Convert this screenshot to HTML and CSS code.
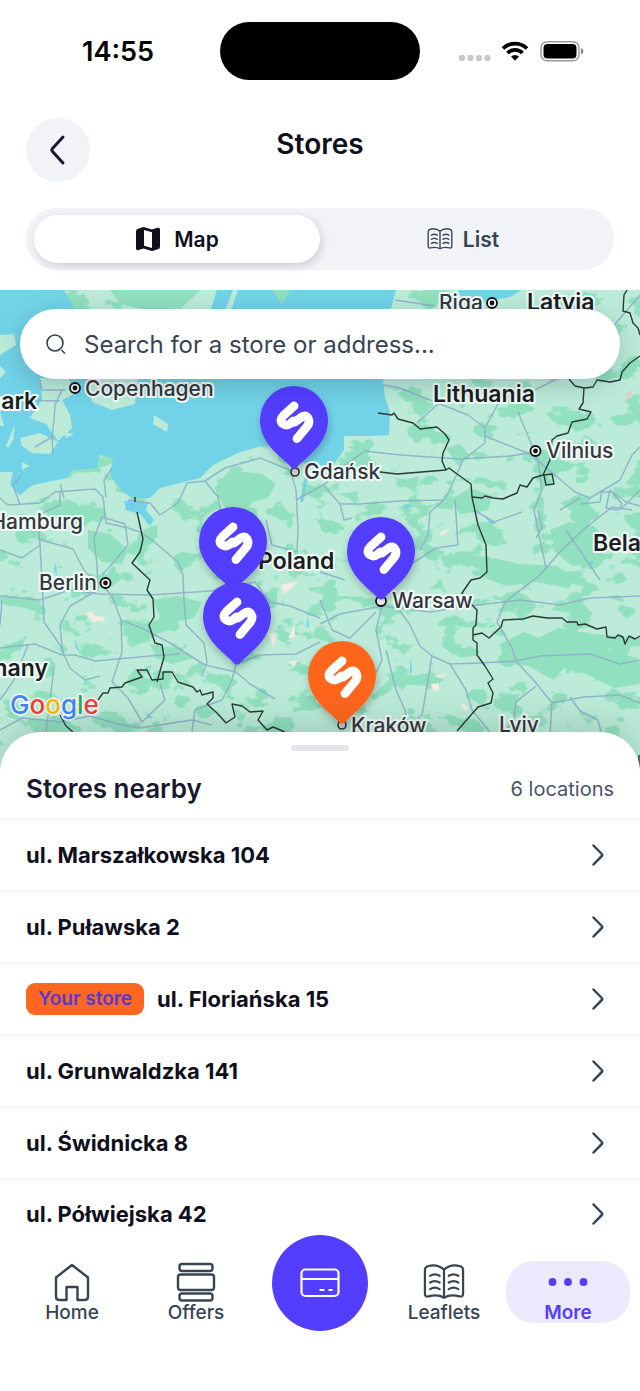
FILE: index.html
```html
<!DOCTYPE html>
<html lang="en">
<head>
<meta charset="utf-8">
<meta name="viewport" content="width=device-width, initial-scale=1">
<title>Stores</title>
<link rel="stylesheet" href="styles.css">
</head>
<body>
<svg class="sprite" aria-hidden="true">
  <symbol id="chevron" viewBox="0 0 32 32"><path d="M11.500 6.500 L19.800 15 Q20.800 16 19.800 17 L11.500 25.500" fill="none" stroke="currentColor" stroke-width="2.500" stroke-linecap="round"/></symbol>
  <symbol id="book" viewBox="0 0 44 44">
    <g fill="none" stroke="currentColor" stroke-width="2.300" stroke-linecap="round" stroke-linejoin="round">
      <path d="M22 9 C17 4.500 10 4 5 5.500 Q2 6.500 2 9.500 V34 Q2 38 6 37 C12 35.500 17 35.500 22 38.500 C27 35.500 32 35.500 38 37 Q42 38 42 34 V9.500 Q42 6.500 39 5.500 C34 4 27 4.500 22 9 Z M22 9 V38"/>
      <path d="M7.500 15.500 Q12 12.500 17.500 15.500 M7.500 22.500 Q12 19.500 17.500 22.500 M7.500 29.500 Q12 26.500 17.500 29.500 M27 15.500 Q32 12.500 37 15.500 M27 22.500 Q32 19.500 37 22.500 M27 29.500 Q32 26.500 37 29.500"/>
    </g>
  </symbol>
  <symbol id="pin" viewBox="-40 -4 80 96" overflow="visible">
    <path d="M-5 79 C-14 70 -34 57 -34 34 A34 34 0 0 1 34 34 C34 57 14 70 5 79 Q0 86 -5 79 Z" fill="currentColor"/>
    <path d="M0 20 L-10.500 29.500 Q-15 34 -11.500 37.500 Q-7.500 40.500 -3.500 37.500 L-.5 35 L1 36 L7 31.500 Q11.500 28.500 14 32 Q16.500 36 13 40.500 L3 52.500" fill="none" stroke="#fff" stroke-width="8.800" stroke-linecap="round" stroke-linejoin="round"/>
  </symbol>
</svg>

<div class="screen">
  <div class="status">
    <time class="status-time">14:55</time>
    <div class="island"></div>
    <div class="status-icons">
      <svg width="126" height="24" viewBox="0 0 126 24" aria-hidden="true">
        <g fill="#c8c8c8"><rect x="1" y="16" width="6" height="6" rx="2"/><rect x="9.500" y="16" width="6" height="6" rx="2"/><rect x="18" y="16" width="6" height="6" rx="2"/><rect x="26.500" y="16" width="6" height="6" rx="2"/></g>
        <g fill="none" stroke="#000" stroke-width="3.800"><path d="M45 9.500 A17 17 0 0 1 69 9.500"/><path d="M49.500 14 A10.500 10.500 0 0 1 64.500 14"/></g>
        <path d="M53 17.500 A6 6 0 0 1 61 17.500 L57 21.800 Z"/>
        <rect x="83" y="2.700" width="38" height="19" rx="6" fill="none" stroke="#999" stroke-width="1.500"/>
        <rect x="85.500" y="5" width="33" height="14.500" rx="4"/>
        <path d="M123 9 Q125.500 10 125.500 12 Q125.500 14.500 123 15.500 Z" fill="#888"/>
      </svg>
    </div>
  </div>

  <header class="header">
    <button class="back" type="button" aria-label="Back">
      <svg width="32" height="32" viewBox="0 0 32 32"><path d="M21 3 L10.500 14.500 Q9.200 16 10.500 17.500 L21 29" fill="none" stroke="currentColor" stroke-width="3" stroke-linecap="round"/></svg>
    </button>
    <h1 class="title">Stores</h1>
  </header>

  <div class="segments" role="tablist">
    <button class="segment segment-active" type="button" role="tab" aria-selected="true">
      <svg width="26" height="26" viewBox="0 0 26 26" aria-hidden="true"><path fill="currentColor" fill-rule="evenodd" d="M1 5.500 Q1 3.500 2.500 3 L7.500 1.200 Q8.500 1 9.500 1.300 L17 3.500 L22.500 1.800 Q25 1.200 25 3.500 V20.500 Q25 22.500 23.500 23 L18 24.800 Q17 25 16 24.700 L8.500 22.500 L3.500 24 Q1 24.800 1 22.500 Z M9 4 V19.800 L17 22 V6.300 Z"/></svg>
      Map
    </button>
    <button class="segment" type="button" role="tab" aria-selected="false">
      <svg width="26" height="26" aria-hidden="true"><use href="#book"/></svg>
      List
    </button>
  </div>

  <section class="map" aria-label="Map of stores">
    <svg class="map-canvas" viewBox="0 290 640 480" preserveAspectRatio="xMidYMin slice">
      <defs>
        <filter id="woods" x="0" y="0" width="100%" height="100%" color-interpolation-filters="sRGB">
          <feTurbulence type="fractalNoise" baseFrequency="0.032 0.042" numOctaves="4" seed="11"/>
          <feColorMatrix values="0 0 0 0 .569  0 0 0 0 .878  0 0 0 0 .749  18 0 0 0 -10.200"/>
        </filter>
        <filter id="drop" x="-30%" y="-20%" width="160%" height="150%"><feDropShadow dx="1" dy="4" stdDeviation="4" flood-opacity=".25"/></filter>
      </defs>
      <rect y="290" width="640" height="480" fill="#bcecd9"/>
      <rect y="290" width="640" height="480" filter="url(#woods)"/>
      <g fill="#91e0bf">
        <path d="M214 488 l12 -10 l18 -6 l18 2 l14 10 l-8 14 l-16 4 l-10 14 l-14 -4 l-8 -12 z"/>
        <path d="M480 566 l14 -8 l26 6 l36 2 l22 12 l-10 10 l-32 -6 l-30 4 l-20 -8 z M550 530 l20 -8 l24 4 l18 18 l-14 16 l-26 6 l-16 -14 z"/>
        <path d="M500 644 l24 -12 l14 6 l20 -10 l36 6 l46 4 v8 l-30 2 l-10 10 l40 4 v22 l-26 4 l-28 -14 l-22 -6 l-10 12 l-26 -14 l-24 -6 z"/>
        <path d="M88 530 l22 4 l18 16 l-6 14 l-20 -2 l-14 -14 z M152 600 l26 -4 l24 6 l-8 16 l-30 6 z M150 644 l26 4 l18 10 l-22 6 l-16 -6 z"/>
        <path d="M450 500 l20 -12 l22 8 l-4 14 l-28 4 z M446 448 l14 -4 l10 12 l-12 10 z M200 290 l-90 0 l10 14 l34 8 l30 -6 z"/>
      </g>
      <g fill="#72d3e8">
        <path d="M0 290 H64 L76 312 H210 L217 290 H396 L390 312 L383 379 L385 397 L390 412 L389 435 L372 436 L344 436 L344 450 L334 464 L318 466 L300 462 L293 467 L277 452 L267 445 L240 452 L213 465 L200 478 L160 488 L150 498 L133 498 L123 492 L110 475 L113 458 L100 455 L97 468 L72 470 L67 478 L33 485 L20 495 L10 485 L13 472 L0 472 Z"/>
        <path d="M458 290 H522 L510 297 L480 302 L462 299 Z M124 501 L148 502 L146 510 L154 520 L150 526 L140 514 L126 510 Z M300 502 l5 -26 l3 0 l-5 26 z"/>
        <path d="M54 570 l2 -8 l1 14 z M74 638 l7 16 l-5 -6 z M306 626 l2 -10 l1 12 z M403 506 l8 -2 l-3 6 z M486 518 l10 6 l-6 0 z M410 656 l2 14 l-2 6 z M145 712 l8 6 l-4 0 z M588 562 l6 -1 l-4 5 z"/>
      </g>
      <g fill="#bcecd9">
        <path d="M40 378 H68 L76 393 L62 400 L70 415 L72 428 L58 441 L46 424 L30 418 L42 400 Z M20 438 L40 433 L58 442 L50 454 L32 453 L22 446 Z M0 335 L14 334 L16 345 L0 355 Z M89 378 H138 L135 404 L112 410 L92 402 Z M154 415 L168 424 L167 432 L153 424 Z"/>
        <path d="M0 412 l4 14 l-4 0 z M6 446 l9 -22 l-2 16 l-5 8 z M0 366 l6 6 l-6 6 z M225 310 l8 -20 h5 l-7 20 z M64 432 l10 2 l-8 4 z M22 462 l8 4 l-8 4 z"/>
        <path d="M272 290 h18 l-8 14 z" fill="#91e0bf"/>
      </g>
      <g fill="#f2ece0">
        <path d="M85 614 l6 -3 l5 5 l8 1 l1 5 l-6 -1 l-5 1 z M281 585 l16 -4 l-5 7 l-8 6 z M288 638 l7 -13 l0 12 z M268 632 l8 2 l-2 14 l-4 -10 z M440 532 l11 -4 l-5 5 l-5 3 z M433 676 l14 -2 l-7 4 z M431 684 l8 -1 l0 8 l-7 -1 z M460 702 l10 6 l-5 3 z M288 662 l10 -2 l-4 7 z"/>
        <path d="M625 393 l7 -3 l0 7 l-7 4 z" fill="#d3d5cd"/>
      </g>
      <g fill="none" stroke="#8eb0c8" stroke-width="1.500" stroke-linejoin="round" opacity=".9">
        <path d="M0 498 L8 505 L40 503 L55 492 L95 489 L103 497 L106 523 L128 528 L140 532 L152 540 L178 562 L183 575 L184 600 L186 625 L204 643 L207 662 L202 676"/>
        <path d="M0 550 L22 558 L40 545 L38 515 L60 505 L60 492 M38 539 L73 549 L85 572 L100 583 L112 596 L121 620 L146 630 L170 643 L205 665 L236 672 L250 684 L275 699"/>
        <path d="M0 596 L40 600 L70 590 L100 594 L150 595 L210 591 L255 582 L270 602 L290 606 L320 618 M0 648 L35 644 L62 655 L75 655 L95 661 L150 656 L180 654"/>
        <path d="M40 545 L43 600 L44 622 L60 645 L70 668 L85 680 L100 676 M63 655 L60 625 L70 606 L98 590 L97 565 L94 538 L102 517 L125 524 L128 545 L112 564 L102 575"/>
        <path d="M0 625 L2 600 M28 645 L14 680 L0 700 M54 666 L50 700 L46 732 M0 730 L22 718 L60 722 L90 716 L118 724 L140 728 L192 720 L212 725"/>
        <path d="M121 620 L122 652 L112 682 L128 698 L142 722 L165 700 L160 684 M192 732 L195 710 L222 700 L232 680 L236 664 L260 655 L296 654 L320 642"/>
        <path d="M106 497 L104 480 L112 468 M20 505 L13 485 L22 475 M60 484 L64 498 M35 447 L52 437 L54 420 L55 405 L62 390 M52 437 L53 455 M15 400 L60 401 M40 380 L42 390 L65 390"/>
        <path d="M128 500 L150 503 L160 515 L178 503 L187 483 L205 481 L225 468 L260 458 L290 470 L296 490 L298 528 L297 552 L272 545 L266 520 M205 481 L218 497 L222 520"/>
        <path d="M296 500 L325 484 L345 465 L365 451 L400 455 L460 459 L510 456 L535 452 M324 486 L340 504 L360 504 L400 501 L444 500 L452 485 L463 460 L485 443 L485 428 L500 400 L535 390 L570 372"/>
        <path d="M384 385 L400 388 L430 400 L468 415 L485 428 M417 423 L440 402 M485 436 L530 454 L575 492 L590 498 L620 480 L632 455 L640 447 M518 412 L528 436 L538 460 L542 490 L534 510 L540 540 L546 568"/>
        <path d="M340 504 L344 520 L352 518 M444 500 L430 512 L428 535 L420 550 M455 500 L458 545 L436 548 L405 568 M632 510 L612 507 L584 529 L560 552 L540 575 L505 602 L497 622 L512 648 L516 661 L536 683 L552 703 L584 697 L620 695 L640 703"/>
        <path d="M320 624 L340 614 L382 606 L430 612 L470 606 L520 600 L560 605 L590 598 L640 596 M382 606 L376 630 L382 660 L370 685 L345 705"/>
        <path d="M395 604 L410 625 L420 646 L432 656 L450 664 L480 663 L515 661 L540 656 L590 654 L620 664 L640 660 M432 656 L428 680 L422 715 L408 727 L405 710 L396 690 L386 650"/>
        <path d="M450 664 L466 690 L472 710 L490 732 M536 686 L516 702 L514 720 L505 732 M552 703 L550 735 M570 697 L580 711 L598 720 L601 732 M320 600 L332 630 L350 638 L376 612 M320 572 L345 580"/>
        <path d="M600 492 h12 l14 10 l14 4 M610 490 l12 14 l-4 6 l-12 -2 z M602 490 l-2 12 l-20 2 M620 510 l20 -20 M560 510 l20 -12 M474 510 l20 12 l28 -10 M538 510 l4 18 l-6 10 M600 580 l-34 -50 M395 300 l40 6 M560 305 l-30 20 M610 330 l30 -35"/>
      </g>
      <g fill="none" stroke="#2b3b38" stroke-width="1.400" stroke-linejoin="round">
        <path d="M380 472 L397 474 L446 470 M378 413 L392 415 L394 413 L398 419 L413 423 L420 429 L437 427 L445 434 L449 440 L443 453 L442 461 L446 470 L449 468 L457 474 L471 484 L472 497 L478 525 L486 545 L487 572 L480 578 L471 580 L462 593 L472 605 L477 610 L476 625 L473 628 L473 640 L477 643 L477 655 L485 666 L493 679 L488 683 L493 693 L491 703 L478 707 L457 731"/>
        <path d="M472 497 L482 498 L485 496 L493 498 L503 499 L512 495 L517 493 L520 485 L527 487 L533 478 L543 475 L550 460 L552 440 L557 436 L568 433 L572 422 L587 419 L591 412 L579 409 L583 403 L584 388 M544 475 L552 474 L554 484 L546 485 Z"/>
        <path d="M569 379 L575 386 L584 388 L593 387 L597 380 L610 382 L620 380 L622 372 L630 363 L640 356 M627 290 L624 295 L623 311 L630 313 L633 323 L638 328 L640 335"/>
        <path d="M473 635 L482 633 L489 638 L501 627 L503 620 L523 619 L533 616 L547 618 L562 618 L567 622 L577 622 L578 625 L585 624 L597 629 L606 627 L607 637 L615 638 L618 635 L623 637 L625 644 L629 636 L635 639 L640 636"/>
        <path d="M135 497 V502 M137 512 L143 539 L140 552 L132 563 L150 580 L147 590 L153 599 L154 617 L149 625 L155 643 L162 645 L164 657 L157 682"/>
        <path d="M98 700 L103 693 L108 693 L110 688 L122 687 L125 683 L142 677 L137 670 L147 670 L152 680 L163 679 L163 672 L172 672 L178 682 L193 687 L197 692 L200 690 L202 695 L213 692 L213 698 L207 704 L217 713 L226 723 L235 717 L232 704 L242 706 L250 712 L263 711 L258 720 L267 730 L273 727 L285 732 M60 715 L66 726 L73 732 M639 755 V768"/>
      </g>
      <g class="markers">
        <g fill="#fff" stroke="#111" stroke-width="1.800"><circle cx="75" cy="388" r="5"/><circle cx="492" cy="303" r="5"/><circle cx="535.500" cy="451" r="5"/><circle cx="105.500" cy="583" r="5"/><circle cx="381" cy="601" r="5"/></g>
        <g fill="#111"><circle cx="75" cy="388" r="2.400"/><circle cx="492" cy="303" r="2.400"/><circle cx="535.500" cy="451" r="2.400"/><circle cx="105.500" cy="583" r="2.400"/></g>
        <g fill="#ddd" stroke="#333" stroke-width="1.600"><circle cx="295" cy="472" r="4"/><circle cx="342" cy="725" r="4"/></g>
      </g>
      <g class="city">
        <text x="85" y="396">Copenhagen</text><text x="439" y="310">Riga</text><text x="546" y="458">Vilnius</text>
        <text x="304" y="479">Gdańsk</text><text x="83" y="529" text-anchor="end">Hamburg</text><text x="39" y="590">Berlin</text>
        <text x="392" y="608">Warsaw</text><text x="351" y="733">Kraków</text><text x="499" y="732">Lviv</text>
      </g>
      <g class="country">
        <text x="527" y="310">Latvia</text><text x="433" y="402">Lithuania</text><text x="37" y="409" text-anchor="end">Denmark</text>
        <text x="258" y="569">Poland</text><text x="593" y="551">Belarus</text><text x="48" y="676" text-anchor="end">Germany</text>
      </g>
      <text class="google" x="10" y="714"><tspan fill="#4285f4">G</tspan><tspan fill="#ea4335">o</tspan><tspan fill="#fbbc05">o</tspan><tspan fill="#4285f4">g</tspan><tspan fill="#34a853">l</tspan><tspan fill="#ea4335">e</tspan></text>
      <g color="#533dff">
        <use href="#pin" x="254" y="382" width="80" height="96" filter="url(#drop)"/>
        <use href="#pin" x="193" y="503" width="80" height="96" filter="url(#drop)"/>
        <use href="#pin" x="197" y="578" width="80" height="96" filter="url(#drop)"/>
        <use href="#pin" x="341" y="513" width="80" height="96" filter="url(#drop)"/>
      </g>
      <g color="#ff661f"><use href="#pin" x="302" y="637" width="80" height="96" filter="url(#drop)"/></g>
    </svg>
    <label class="search">
      <svg width="22" height="22" viewBox="0 0 22 22" aria-hidden="true"><g fill="none" stroke="currentColor" stroke-width="1.600" stroke-linecap="round"><circle cx="9" cy="10" r="8"/><path d="M16 17.500 L18.500 20"/></g></svg>
      <input class="search-input" type="text" placeholder="Search for a store or address..." aria-label="Search for a store or address">
    </label>
  </section>

  <main class="sheet">
    <div class="handle"></div>
    <div class="sheet-header">
      <h2 class="sheet-title">Stores nearby</h2>
      <span class="count">6 locations</span>
    </div>
    <div class="list">
      <button class="row" type="button"><span>ul. Marszałkowska 104</span><svg class="chevron"><use href="#chevron"/></svg></button>
      <button class="row" type="button"><span>ul. Puławska 2</span><svg class="chevron"><use href="#chevron"/></svg></button>
      <button class="row" type="button"><span class="badge">Your store</span><span>ul. Floriańska 15</span><svg class="chevron"><use href="#chevron"/></svg></button>
      <button class="row" type="button"><span>ul. Grunwaldzka 141</span><svg class="chevron"><use href="#chevron"/></svg></button>
      <button class="row" type="button"><span>ul. Świdnicka 8</span><svg class="chevron"><use href="#chevron"/></svg></button>
      <button class="row" type="button"><span>ul. Półwiejska 42</span><svg class="chevron"><use href="#chevron"/></svg></button>
    </div>
  </main>

  <nav class="nav">
    <a class="nav-item" href="#home">
      <svg width="42" height="42" viewBox="0 0 42 42" aria-hidden="true"><path d="M5 16.500 L21 4 L37 16.500 V35.500 Q37 39 33.500 39 H26.500 V26 H15.500 V39 H8.500 Q5 39 5 35.500 Z" fill="none" stroke="currentColor" stroke-width="2.400" stroke-linejoin="round"/></svg>
      Home
    </a>
    <a class="nav-item" href="#offers">
      <svg width="42" height="42" viewBox="0 0 42 42" aria-hidden="true"><g fill="none" stroke="currentColor" stroke-width="2.400"><rect x="4.500" y="3" width="33" height="7" rx="2.500"/><rect x="3" y="13.500" width="36" height="15.500" rx="2.500"/><rect x="4.500" y="32.500" width="33" height="7" rx="2.500"/></g></svg>
      Offers
    </a>
    <button class="fab" type="button" aria-label="Card">
      <svg width="40" height="30" viewBox="0 0 40 30"><g fill="none" stroke="currentColor" stroke-width="2.200"><rect x="1.500" y="1.500" width="37" height="26.500" rx="4"/><path d="M1.500 11 H38.500 M19.500 22 h5 M28.500 22 h4"/></g></svg>
    </button>
    <a class="nav-item" href="#leaflets">
      <svg width="42" height="42" aria-hidden="true"><use href="#book"/></svg>
      Leaflets
    </a>
    <a class="nav-item nav-active" href="#more" aria-current="page">
      <svg width="42" height="42" viewBox="0 0 42 42" aria-hidden="true"><g fill="currentColor"><circle cx="5.500" cy="21" r="3.900"/><circle cx="21" cy="21" r="3.900"/><circle cx="36.500" cy="21" r="3.900"/></g></svg>
      More
    </a>
  </nav>
</div>
</body>
</html>
```

FILE: styles.css
```css
* { box-sizing: border-box; }

body {
  margin: 0;
  background: #fff;
  color: #10101c;
  font-family: Inter, "Liberation Sans", sans-serif;
}

button {
  border: 0;
  padding: 0;
  background: none;
  color: inherit;
  font: inherit;
  cursor: pointer;
}

.sprite {
  position: absolute;
  width: 0;
  height: 0;
}

.screen {
  display: flex;
  flex-direction: column;
  min-height: 100vh;
  background: #fff;
}

.status {
  display: grid;
  grid-template-columns: 1fr 200px 1fr;
  align-items: center;
  padding: 22px 0 24px;
  color: #000;
}

.status-time {
  padding-left: 16px;
  text-align: center;
  font-size: 27px;
  font-weight: 600;
}

.island {
  height: 58px;
  border-radius: 29px;
  background: #000;
}

.status-icons {
  display: flex;
  justify-content: flex-end;
  padding-right: 56px;
}

.header {
  display: grid;
  grid-template-columns: 64px 1fr 64px;
  padding: 14px 26px 26px;
}

.back {
  display: grid;
  place-items: center;
  width: 64px;
  height: 64px;
  border-radius: 50%;
  background: #f2f3f6;
  color: #1a1830;
}

.title {
  margin: 0;
  text-align: center;
  font-size: 28px;
  font-weight: 600;
  line-height: 52px;
}

.segments {
  display: grid;
  grid-template-columns: 1fr 1fr;
  margin: 0 26px 20px;
  padding: 7px 8px;
  border-radius: 32px;
  background: #f2f3f6;
}

.segment {
  display: flex;
  align-items: center;
  justify-content: center;
  gap: 10px;
  height: 48px;
  border-radius: 24px;
  color: #384353;
  font-size: 21px;
  font-weight: 600;
}

.segment-active {
  gap: 13px;
  background: #fff;
  color: #10101c;
  box-shadow: 2px 3px 8px rgba(20, 20, 50, .16);
}

.map { position: relative; }

.map-canvas {
  display: block;
  width: 100%;
  height: 480px;
}

.city text,
.country text,
.google {
  stroke: #f2fbf7;
  stroke-width: 4px;
  stroke-linejoin: round;
  paint-order: stroke;
}

.city text {
  fill: #34373d;
  font-size: 21px;
  font-weight: 500;
}

.country text {
  fill: #1b1d21;
  font-size: 23px;
  font-weight: 600;
}

.google {
  font-size: 26px;
  font-weight: 500;
  stroke-width: 3px;
}

.search {
  position: absolute;
  top: 19px;
  left: 20px;
  right: 20px;
  display: flex;
  align-items: center;
  gap: 16px;
  height: 70px;
  padding: 0 26px;
  border-radius: 35px;
  background: #fff;
  color: #384353;
  box-shadow: 0 6px 24px rgba(20, 40, 60, .22);
}

.search-input {
  flex: 1;
  min-width: 0;
  border: 0;
  padding: 0;
  background: none;
  color: inherit;
  font: inherit;
  font-size: 24px;
  outline: 0;
}

.search-input::placeholder {
  color: #384353;
  opacity: 1;
}

.sheet {
  position: relative;
  margin-top: -38px;
  padding-top: 13px;
  border-radius: 40px 40px 0 0;
  background: #fff;
  box-shadow: 0 -4px 40px rgba(20, 40, 40, .2);
}

.handle {
  width: 58px;
  height: 6px;
  margin: 0 auto;
  border-radius: 3px;
  background: #e4e5ea;
}

.sheet-header {
  display: flex;
  align-items: center;
  justify-content: space-between;
  height: 69px;
  padding: 8px 26px 0;
  border-bottom: 2px solid #f5f5f7;
}

.sheet-title {
  margin: 0;
  color: #1a1830;
  font-size: 26px;
  font-weight: 600;
}

.count {
  color: #4a5565;
  font-size: 20px;
}

.list {
  display: flex;
  flex-direction: column;
}

.row {
  display: flex;
  align-items: center;
  gap: 13px;
  height: 72px;
  padding: 0 26px;
  border-bottom: 2px solid #f5f5f7;
  text-align: left;
  font-size: 22px;
  font-weight: 700;
}

.row:last-child {
  height: 68px;
  border-bottom: 0;
}

.chevron {
  width: 32px;
  height: 32px;
  margin-left: auto;
  color: #384353;
}

.badge {
  padding: 0 12px;
  border-radius: 9px;
  background: #ff661f;
  color: #533bd6;
  font-size: 19px;
  font-weight: 600;
  line-height: 32px;
}

.nav {
  position: relative;
  display: grid;
  grid-template-columns: repeat(5, 1fr);
  padding: 13px 10px 68px;
  background: #fff;
}

.nav-item {
  display: flex;
  flex-direction: column;
  align-items: center;
  height: 62px;
  border-radius: 28px;
  color: #384353;
  font-size: 19px;
  font-weight: 500;
  line-height: 20px;
  text-decoration: none;
}

.nav-active {
  background: #edeaff;
  color: #533dff;
  font-weight: 600;
}

.fab {
  display: grid;
  place-items: center;
  justify-self: center;
  width: 96px;
  height: 96px;
  margin: -26px 0 -8px;
  border-radius: 50%;
  background: #533dff;
  color: #fff;
}
```
